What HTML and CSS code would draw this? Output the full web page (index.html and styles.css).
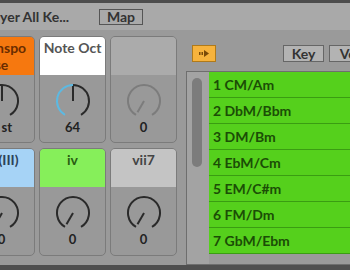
FILE: index.html
```html
<!DOCTYPE html>
<html lang="en">
<head>
  <meta charset="UTF-8">
  <title>Player All Keys</title>
  <link rel="stylesheet" href="styles.css">
</head>
<body>
  <div class="topstrip"></div>
  <div class="titlebar">
    <span class="title">Player All Ke...</span>
    <button class="map-btn">Map</button>
  </div>

  <div class="main">
    <div class="pads">
      <div class="pad">
        <div class="pad-head head-orange">Transpo<wbr>se</div>
        <svg class="knob" viewBox="0 0 36 36">
          <path class="arc" d="M10 31.86 A16 16 0 1 1 26 31.86"/>
          <path class="needle" d="M18 18 L18 3"/>
        </svg>
        <div class="pad-value">0 st</div>
      </div>
      <div class="pad">
        <div class="pad-head head-white">Note Oct</div>
        <svg class="knob" viewBox="0 0 36 36">
          <path class="arc arc-on" d="M10 31.86 A16 16 0 0 1 18 2"/>
          <path class="arc" d="M18 2 A16 16 0 0 1 26 31.86"/>
          <path class="needle" d="M18 18 L18 3"/>
        </svg>
        <div class="pad-value">64</div>
      </div>
      <div class="pad pad-off">
        <div class="pad-head head-grey"></div>
        <svg class="knob" viewBox="0 0 36 36">
          <path class="arc" d="M10 31.86 A16 16 0 1 1 26 31.86"/>
          <path class="needle" d="M18 18 L11.5 29.3"/>
        </svg>
        <div class="pad-value">0</div>
      </div>

      <div class="pad">
        <div class="pad-head head-blue">iii (III)</div>
        <svg class="knob" viewBox="0 0 36 36">
          <path class="arc" d="M10 31.86 A16 16 0 1 1 26 31.86"/>
          <path class="needle" d="M18 18 L11.5 29.3"/>
        </svg>
        <div class="pad-value">0</div>
      </div>
      <div class="pad">
        <div class="pad-head head-green">iv</div>
        <svg class="knob" viewBox="0 0 36 36">
          <path class="arc" d="M10 31.86 A16 16 0 1 1 26 31.86"/>
          <path class="needle" d="M18 18 L11.5 29.3"/>
        </svg>
        <div class="pad-value">0</div>
      </div>
      <div class="pad">
        <div class="pad-head head-light">vii7</div>
        <svg class="knob" viewBox="0 0 36 36">
          <path class="arc" d="M10 31.86 A16 16 0 1 1 26 31.86"/>
          <path class="needle" d="M18 18 L11.5 29.3"/>
        </svg>
        <div class="pad-value">0</div>
      </div>
    </div>

    <div class="side">
      <div class="side-buttons">
        <button class="dir-btn">
          <svg viewBox="0 0 22 15" width="22" height="15">
            <rect x="6" y="6" width="1.5" height="3" fill="#7a4a08"/>
            <rect x="8.5" y="6" width="1.5" height="3" fill="#7a4a08"/>
            <path d="M11 4 L16 7.5 L11 11 Z" fill="#7a4a08"/>
          </svg>
        </button>
        <button class="btn">Key</button>
        <button class="btn">Vel</button>
      </div>
      <div class="list">
        <div class="scroll"><div class="thumb"></div></div>
        <ul class="chords">
          <li>1 CM/Am</li>
          <li>2 DbM/Bbm</li>
          <li>3 DM/Bm</li>
          <li>4 EbM/Cm</li>
          <li>5 EM/C#m</li>
          <li>6 FM/Dm</li>
          <li>7 GbM/Ebm</li>
        </ul>
      </div>
    </div>
  </div>
  <div class="bottomstrip"></div>
</body>
</html>
```

FILE: styles.css
```css
body {
  margin: 0;
  width: 350px;
  height: 270px;
  overflow: hidden;
  background: #9a9a9a;
  font-family: Lato, 'Liberation Sans', sans-serif;
  font-weight: 700;
  color: #2e2e2e;
}
button {
  font-family: inherit;
  font-weight: 700;
  padding: 0;
  cursor: pointer;
}
.topstrip {
  height: 3px;
  background: #4d4d4d;
}
.titlebar {
  height: 27px;
  background: #a9a9a9;
  display: flex;
  align-items: center;
}
.title {
  margin-left: -19px;
  width: 118px;
  flex: none;
  font-size: 14px;
  white-space: nowrap;
  color: #333;
}
.map-btn {
  width: 44px;
  height: 16px;
  border: 1px solid #555;
  background: #a9a9a9;
  font-size: 14px;
  line-height: 14px;
  color: #333;
}
.main {
  display: flex;
  height: 235px;
  box-sizing: border-box;
  padding-top: 6px;
}
.pads {
  margin-left: -32px;
  flex: none;
  display: grid;
  grid-template-columns: repeat(3, 67px);
  grid-template-rows: 107px 108px;
  column-gap: 4px;
  row-gap: 5px;
}
.pad {
  background: #999;
  border: 1px solid #7b7b7b;
  border-radius: 5px;
  overflow: hidden;
  display: flex;
  flex-direction: column;
  align-items: center;
  box-sizing: border-box;
}
.pad-head {
  align-self: stretch;
  height: 38px;
  flex: none;
  padding: 2px 2px 0;
  box-sizing: border-box;
  text-align: center;
  font-size: 14px;
  line-height: 17px;
  overflow-wrap: anywhere;
}
.head-orange { background: #f6780f; color: #6a2c00; }
.head-white { background: #fff; color: #555; }
.head-grey { background: #ababab; }
.head-blue { background: #a6d3f6; color: #2d4258; }
.head-green { background: #86ef5a; color: #2a5e12; }
.head-light { background: #c4c4c4; color: #444; }
.knob {
  width: 36px;
  height: 36px;
  margin-top: 8px;
  fill: none;
}
.knob .arc {
  stroke: #2a2a2a;
  stroke-width: 2;
}
.knob .arc-on {
  stroke: #5cb9e2;
}
.knob .needle {
  stroke: #2a2a2a;
  stroke-width: 2;
}
.pad-off .arc, .pad-off .needle {
  stroke: #7c7c7c;
}
.pad-value {
  margin-top: 1px;
  font-size: 13px;
  line-height: 14px;
  color: #222;
}
.side {
  flex: 1;
  min-width: 0;
  margin-left: 9px;
  padding-top: 9px;
  display: flex;
  flex-direction: column;
}
.side-buttons {
  display: flex;
  height: 17px;
  gap: 5px;
  padding-left: 6px;
}
.dir-btn {
  width: 24px;
  flex: none;
  margin-right: 62px;
  background: #f7b33d;
  border: 1px solid #b07a1a;
  display: flex;
  align-items: center;
  justify-content: center;
}
.btn {
  width: 41px;
  flex: none;
  background: #b3b3b3;
  border: 1px solid #666;
  font-size: 14px;
  line-height: 15px;
  color: #333;
}
.list {
  margin-top: 9px;
  flex: 1;
  display: flex;
  border: 1px solid #6e6e6e;
  border-right: none;
}
.scroll {
  width: 22px;
  flex: none;
  background: #a3a3a3;
  padding: 6px 0 0 5px;
  box-sizing: border-box;
}
.thumb {
  width: 10px;
  height: 89px;
  border-radius: 5px;
  background: #7c7c7c;
}
.chords {
  list-style: none;
  margin: 0;
  padding: 0;
  flex: 1;
}
.chords li {
  height: 26px;
  box-sizing: border-box;
  padding-left: 4px;
  border-bottom: 1px solid #3a9d12;
  background: #55d01c;
  font-size: 14px;
  line-height: 25px;
  color: #1b4d06;
  white-space: nowrap;
}
.bottomstrip {
  height: 5px;
  background: #4f4f4f;
}
```
